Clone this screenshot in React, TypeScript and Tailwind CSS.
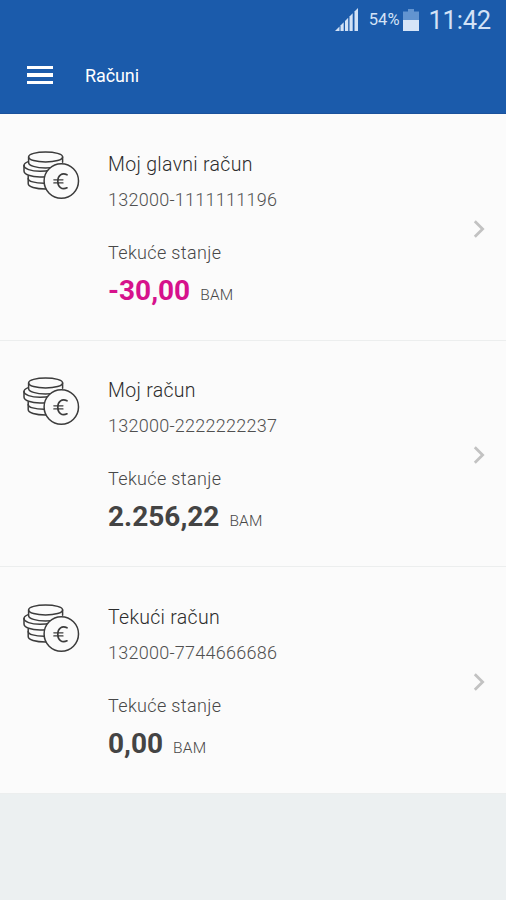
import React from "react";

interface Account {
  name: string;
  number: string;
  balance: string;
  currency: string;
}

const accounts: Account[] = [
  { name: "Moj glavni račun", number: "132000-1111111196", balance: "-30,00", currency: "BAM" },
  { name: "Moj račun", number: "132000-2222222237", balance: "2.256,22", currency: "BAM" },
  { name: "Tekući račun", number: "132000-7744666686", balance: "0,00", currency: "BAM" },
];

function SignalIcon() {
  return (
    <svg width="24" height="24" viewBox="0 0 24 24" fill="#d3e2f6">
      <path d="M0 23 L4.5 18.5 V23 Z" />
      <path d="M5.5 17.5 L8.7 14.3 V23 H5.5 Z" />
      <path d="M10 13 L13.2 9.8 V23 H10 Z" />
      <path d="M14.5 8.5 L17.7 5.3 V23 H14.5 Z" />
      <path d="M19.5 3.5 L23 0 V23 H19.5 Z" />
    </svg>
  );
}

function BatteryIcon() {
  return (
    <svg width="16" height="22" viewBox="0 0 16 22">
      <path d="M5 0 H11 V2.5 H16 V11 H0 V2.5 H5 Z" fill="#6294d0" />
      <path d="M0 11 H16 V22 H0 Z" fill="#d6e5f8" />
    </svg>
  );
}

function CoinsIcon() {
  return (
    <svg width="58" height="50" viewBox="0 0 58 50" fill="none" stroke="#3c3c3c" strokeWidth="1.5" strokeLinecap="round">
      {/* stack of coins */}
      <ellipse cx="23.6" cy="6.9" rx="17" ry="5" />
      <path d="M6.6 6.9 V12.4 C6.6 15.6 14 18 23.6 18 C27.5 18 31.5 17.5 34.5 16.4" />
      <path d="M40.6 6.9 V12.2" />
      <path d="M6.2 11.6 C3.2 12.6 2 13.8 2 15.6 C2 18.8 9 21.3 18 21.3 C22 21.3 25.5 21 28.2 20.2" />
      <path d="M2 15.6 V21 C2 24.4 9 27 18 27 C20.5 27 22 26.9 23.6 26.7" />
      <path d="M6.2 26 V28.4 C6.2 31.3 13 33.2 22 33.2" />
      <path d="M6.2 28.4 V33.6 C6.2 36.8 13.4 39 23.8 39" />
      {/* euro coin in front */}
      <circle cx="39.3" cy="31" r="17.2" fill="#fbfbfb" />
      <path d="M45 24.8 C40 22.2 35.8 25.4 35.8 31.2 C35.8 37 39.8 40.2 45 37.8" strokeWidth="1.7" />
      <path d="M31.8 29.8 H41 M31.8 32.9 H41" strokeWidth="1.2" />
    </svg>
  );
}

function AccountRow({ account }: { account: Account }) {
  const negative = account.balance.startsWith("-");

  return (
    <div className="flex h-[226.5px] border-b border-[#eceeee] bg-[#fbfbfb] pl-[22px] pr-[21px]">
      <div className="w-[86px] shrink-0 pt-[35.5px]">
        <CoinsIcon />
      </div>
      <div className="flex-1 pt-[32.5px] leading-[36px]">
        <div className="text-[19.5px] font-light tracking-[0.3px] text-[#2c2c2c]">{account.name}</div>
        <div className="-mt-px text-[18px] font-light tracking-[0.25px] text-[#505050]">{account.number}</div>
        <div className="mt-[17px] text-[18px] font-light tracking-[0.35px] text-[#484848]">Tekuće stanje</div>
        <div className="mt-px flex items-baseline gap-[10px] pt-px">
          <span className={`text-[28px] font-bold ${negative ? "text-[#d6128c]" : "text-[#444444]"}`}>
            {account.balance}
          </span>
          <span className="text-[15.5px] font-light tracking-[0.2px] text-[#484848]">{account.currency}</span>
        </div>
      </div>
      <div className="flex items-center pt-[4px]">
        <svg width="12" height="18" viewBox="0 0 12 18" fill="none" stroke="#c2c2c2" strokeWidth="2.8">
          <path d="M1.8 1.3 L9.6 9 L1.8 16.7" />
        </svg>
      </div>
    </div>
  );
}

export default function App() {
  return (
    <div className="h-[900px] w-[506px] overflow-hidden bg-[#ecf0f1] font-['Roboto',sans-serif]">
      <header className="h-[114px] border-b border-[#1a529c] bg-[#1b5bab] text-white">
        <div className="flex h-[40px] items-center justify-end pr-[15px] text-[#d3e2f6]">
          <SignalIcon />
          <span className="ml-[10px] text-[16.5px]">54%</span>
          <span className="ml-[4px]">
            <BatteryIcon />
          </span>
          <span className="ml-[9px] text-[25.5px] tracking-[-0.2px]">11:42</span>
        </div>
        <div className="flex h-[70px] items-center pl-[27px]">
          <button className="flex flex-col gap-[4px]" aria-label="Menu">
            <span className="h-[3.5px] w-[26px] bg-white" />
            <span className="h-[3.5px] w-[26px] bg-white" />
            <span className="h-[3.5px] w-[26px] bg-white" />
          </button>
          <h1 className="ml-[32px] text-[18px] tracking-[-0.1px]">Računi</h1>
        </div>
      </header>
      <main>
        {accounts.map((account) => (
          <AccountRow key={account.number} account={account} />
        ))}
      </main>
    </div>
  );
}
